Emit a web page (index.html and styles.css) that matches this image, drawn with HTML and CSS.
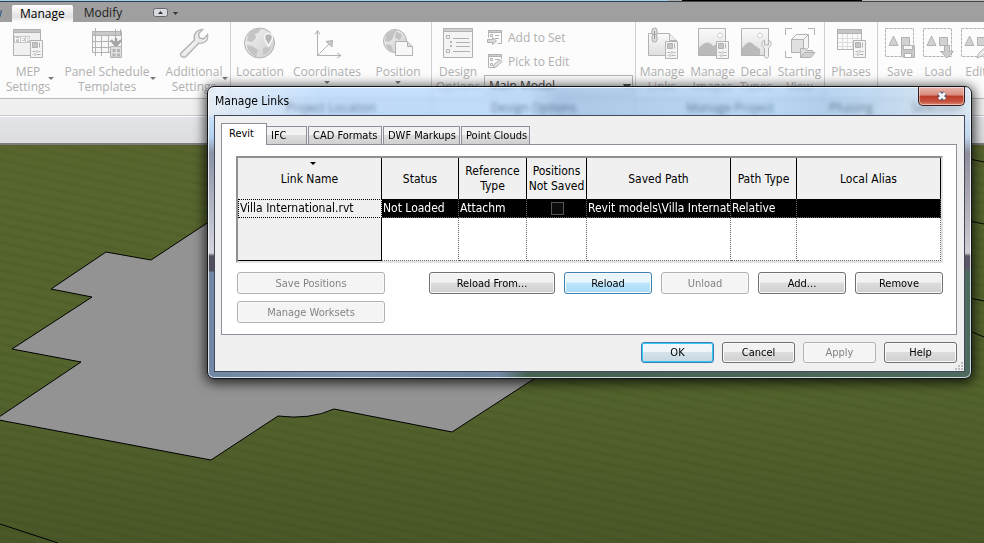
FILE: index.html
```html
<!DOCTYPE html>
<html lang="en">
<head>
<meta charset="utf-8">
<title>Manage Links</title>
<link rel="stylesheet" href="styles.css">
</head>
<body>
<svg class="defs" aria-hidden="true">
  <defs>
    <linearGradient id="fade" x1="0" y1="0" x2="0" y2="1"><stop offset="0" stop-color="#fafafa"/><stop offset="1" stop-color="#dedede"/></linearGradient>
    <linearGradient id="globe" x1="0" y1="0" x2="1" y2="1"><stop offset="0" stop-color="#f2f2f2"/><stop offset="1" stop-color="#cfcfcf"/></linearGradient>
    <g id="sheet">
      <path d="M.5.5h12v17H.5z" fill="#f4f4f4"/>
      <path d="M2.500 2.500h5v5h-5z" fill="#c4c4c4"/>
      <path d="M9.500 2.500v5M2.500 11.500h3M8.500 11.500h2M2.500 14.500h1M6.500 14.500h4M7 10v3M5 13v3"/>
    </g>
    <g id="shapes">
      <path d="M.5 1.500h28v28H.5z" fill="none" stroke-dasharray="3 1"/>
      <path d="M8.500 9l4.500 9.500H4z" fill="#d2d2d2"/>
      <path d="M16.500 10.500h8v8h-8z" fill="#d2d2d2"/>
    </g>
  </defs>
  <symbol id="i-mep" viewBox="0 0 32 32">
    <path d="M1.500 2.500h27v26h-27z" fill="#f1f1f1"/><path d="M1.500 2.500h27v3h-27z" fill="#c2c2c2"/>
    <path d="M2 9h16v7H2z" fill="#c6c6c6" stroke="none"/>
    <path d="M3.500 15v-4.500l2 2 2-2V15M13 10.500H9.500v4H13M9.500 12.500H12M14.500 15v-4.500h2.500v2.500h-2" stroke="#fff" fill="none"/>
    <use href="#sheet" x="18" y="13"/>
  </symbol>
  <symbol id="i-panel" viewBox="0 0 32 32">
    <path d="M1.500 4.500h29v21h-29z" fill="#f7f7f7"/><path d="M1.500 4.500h29v4h-29z" fill="#c9c9c9"/>
    <path d="M4.500 1v28M10.500 8v18M17.500 8v18M24.500 2v10M29.500 2v6M1 14.500h30M1 20.500h30M10.500 26v3" fill="none"/>
    <path d="M25 11v8M20 13l5 6 5-6" stroke-width="2.500" stroke="#a4a4a4" fill="none"/>
    <path d="M19.500 19.500h11v11h-11z" fill="#e0e0e0"/><path d="M21.500 22h3v3h-3zM26 22h3v3h-3zM21.500 26.500h3v3h-3zM26 26.500h3v3h-3z" fill="#b4b4b4" stroke="none"/>
  </symbol>
  <symbol id="i-wrench" viewBox="0 0 32 32">
    <path d="M3 26L16.500 13C15 8 18 3 24.500 2.500L20.500 7l1 4 4 1 4-4.500c1.500 5.500-3.500 10-8.500 8.500L8 29.500c-3 2-7-1-5-3.500z" fill="#ebebeb" stroke-width="1.300"/><path d="M6 26.500L18 14.500" fill="none" stroke="#fff"/>
  </symbol>
  <symbol id="i-location" viewBox="0 0 32 32">
    <circle cx="15.500" cy="16" r="15" fill="url(#globe)"/>
    <path d="M4 8c3-5 9-7 13-6l-3 4-3 1 1 4-4 4-5-1zM3 18l5 1 6 4-2 7C7 27 3 23 3 18zM19 21l8-2c0 4-4 8-8 9z" fill="#c4c4c4" stroke="none"/>
    <path d="M24.500 20c-1-5-4-6-4-9.500a4 4 0 0 1 8 0c0 3.500-3 4.500-4 9.500z" fill="#b5b5b5" stroke="#f8f8f8" stroke-width="1.500"/>
  </symbol>
  <symbol id="i-coord" viewBox="0 0 32 32">
    <path d="M6.500 29V4M4 7.500l2.500-4 2.500 4M6 28.500h23M26 26l4 2.500-4 2.500M7 28l14-14" fill="none"/><path d="M15 14.500l6.500-1L21 20z" fill="#c9c9c9"/>
  </symbol>
  <symbol id="i-position" viewBox="0 0 32 32">
    <circle cx="13" cy="14" r="11.500" fill="url(#globe)"/>
    <path d="M4 8c3-4 7-5 10-5l-2 5-2 5-4 2-3-1zM14 4l6 4-2 5-5-2zM4 17l5 1 2 6c-4 0-7-4-7-7z" fill="#c2c2c2" stroke="none"/>
    <path d="M13.500 14.500h12l5 5v9h-17z" fill="#f7f7f7"/><path d="M25.500 14.500v5h5" fill="#ddd"/>
  </symbol>
  <symbol id="i-options" viewBox="0 0 32 32">
    <path d="M1.500 1.500h29v29h-29z" fill="#f4f4f4"/><path d="M1.500 1.500h29v3h-29z" fill="#d0d0d0"/>
    <path d="M4.500 8.500h3v3h-3zM4.500 22.500h3v3h-3zM11 11.500h16M14 15.500h14M14 19.500h14M11 24.500h17" fill="none"/><path d="M8.500 14.500h1v1h-1zM8.500 18.500h1v1h-1z"/>
  </symbol>
  <symbol id="i-add" viewBox="0 0 16 16">
    <path d="M1.500 1.500h13v13h-4M1.500 1.500v7" fill="none"/><path d="M1.500 1.500h13v2h-13z" fill="#ccc"/><path d="M3.500 5.500h2v2h-2zM8 6.500h4M8 9.500h4" fill="none"/><path d="M.5 10.500h5v-2l4 3.500-4 3.500v-2h-5z" fill="#d9d9d9"/>
  </symbol>
  <symbol id="i-pick" viewBox="0 0 16 16">
    <path d="M6 14.500H1.500v-13h13V6" fill="none"/><path d="M1.500 1.500h13v2h-13z" fill="#ccc"/><path d="M3.500 5.500h2v2h-2zM3.500 10.500h2v2h-2zM8 6.500h4" fill="none"/><path d="M6 15l1-3.500 6-5 2 2-6 5.500z" fill="#e2e2e2"/>
  </symbol>
  <symbol id="i-links" viewBox="0 0 32 32">
    <path d="M2.500 6.500h21l7 7v15h-28z" fill="url(#fade)"/><path d="M23.500 6.500v7h7" fill="#eee"/>
    <rect x="6" y="1" width="5" height="8" rx="2.500" fill="#ddd" stroke="#aaa"/><rect x="6" y="7" width="5" height="8" rx="2.500" fill="#ddd" stroke="#aaa"/><path d="M8.500 4v8" stroke="#999"/>
    <use href="#sheet" x="19" y="14"/>
  </symbol>
  <symbol id="i-images" viewBox="0 0 32 32">
    <path d="M1.500 1.500h27v27h-27z" fill="url(#fade)"/><circle cx="23" cy="8.500" r="2.500" fill="#fff" stroke="#ccc"/>
    <path d="M2 21c5-6 10-8 14-2l4-2v11H2z" fill="#bababa" stroke="none"/>
    <use href="#sheet" x="19" y="14"/>
  </symbol>
  <symbol id="i-decal" viewBox="0 0 32 32">
    <path d="M1.500 1.500h27v27h-27z" fill="url(#fade)"/><circle cx="20" cy="8.500" r="2.500" fill="#fff" stroke="#ccc"/>
    <path d="M2 21c5-6 8-8 12-3l6 4v6H2z" fill="#bababa" stroke="none"/>
    <path d="M26.500 31c-2 0-2-1-2-3v-7c-4-3-3-7 0-8v5h4v-5c3 1 4 5 0 8v7c0 2 0 3-2 3z" fill="#f0f0f0"/>
  </symbol>
  <symbol id="i-starting" viewBox="0 0 32 32">
    <path d="M1.500 8V1.500H8M24 1.500h6.500V8M1.500 24v6.500H8" fill="none"/>
    <path d="M7.500 12.500l5-5h12v13l-5 5h-12z" fill="#f4f4f4"/><path d="M7.500 12.500h12v13h-12z" fill="#e0e0e0"/><path d="M19.500 12.500l5-5" fill="none"/>
    <path d="M16.500 30.500v-9h5l1 2h6v3" fill="#ddd"/><path d="M16.500 30.500l4-5h10.500l-4 5z" fill="#d0d0d0"/>
  </symbol>
  <symbol id="i-phases" viewBox="0 0 32 32">
    <path d="M2.500 2.500h24v20h-24z" fill="#fafafa"/><path d="M2.500 2.500h24v4h-24z" fill="#c4c4c4"/>
    <path d="M2 11.500h25M2 15.500h25M2 19.500h25M7.500 7v15M12.500 7v15M17.500 7v15M22.500 7v15" fill="none" stroke="#ddd"/><path d="M2.500 2.500h24v20h-24z" fill="none"/>
    <use href="#sheet" x="18" y="13"/>
  </symbol>
  <symbol id="i-save" viewBox="0 0 32 32"><use href="#shapes" x="1"/>
    <path d="M17.500 18.500h13v12h-11l-2-2z" fill="#c9c9c9"/><path d="M19.500 18.500h9v4h-9z" fill="#f6f6f6"/><path d="M20.500 26.500h7v4h-7z" fill="#fff"/>
  </symbol>
  <symbol id="i-load" viewBox="0 0 32 32"><use href="#shapes" x="1"/><path d="M22.500 18.500h5v6h4l-6.500 6.500-6.500-6.500h4z" fill="#ccc"/></symbol>
  <symbol id="i-edit" viewBox="0 0 32 32"><use href="#shapes" x="1"/><path d="M17 31l2-5 10-9 3 3-10 9z" fill="#ececec"/></symbol>
</svg>

<header class="ribbon">
  <nav class="tabs">
    <a class="tab tab-view" href="#">View</a>
    <a class="tab tab-active" href="#">Manage</a>
    <a class="tab" href="#">Modify</a>
    <button class="collapse" aria-label="Minimize ribbon"><svg width="26" height="12" viewBox="0 0 26 12"><rect x=".5" y="1.500" width="14" height="8" rx="2" fill="#d8dade" stroke="#62666e"/><path d="M5 7h5L7.500 4zM20 5h5l-2.500 3z" fill="#333"/></svg></button>
  </nav>
  <div class="panels">
    <section class="group">
      <div class="tools">
        <button class="tool w56 side"><svg><use href="#i-mep"/></svg><span>MEP<br>Settings</span></button>
        <button class="tool w102 side"><svg><use href="#i-panel"/></svg><span>Panel Schedule<br>Templates</span></button>
        <button class="tool w70 side"><svg><use href="#i-wrench"/></svg><span>Additional<br>Settings</span></button>
      </div>
      <h2></h2>
    </section>
    <section class="group">
      <div class="tools">
        <button class="tool w58"><svg><use href="#i-location"/></svg><span>Location</span></button>
        <button class="tool w76 below"><svg><use href="#i-coord"/></svg><span>Coordinates</span></button>
        <button class="tool w66 below"><svg><use href="#i-position"/></svg><span>Position</span></button>
      </div>
      <h2>Project Location</h2>
    </section>
    <section class="group">
      <div class="tools">
        <button class="tool w52"><svg><use href="#i-options"/></svg><span>Design<br>Options</span></button>
        <div class="stack">
          <button class="small"><svg><use href="#i-add"/></svg>Add to Set</button>
          <button class="small"><svg><use href="#i-pick"/></svg>Pick to Edit</button>
          <select aria-label="Active design option"><option>Main Model</option></select>
        </div>
      </div>
      <h2>Design Options</h2>
    </section>
    <section class="group">
      <div class="tools">
        <button class="tool w52"><svg><use href="#i-links"/></svg><span>Manage<br>Links</span></button>
        <button class="tool w48"><svg><use href="#i-images"/></svg><span>Manage<br>Images</span></button>
        <button class="tool w38"><svg><use href="#i-decal"/></svg><span>Decal<br>Types</span></button>
        <button class="tool w48"><svg><use href="#i-starting"/></svg><span>Starting<br>View</span></button>
      </div>
      <h2>Manage Project</h2>
    </section>
    <section class="group">
      <div class="tools">
        <button class="tool w52"><svg><use href="#i-phases"/></svg><span>Phases</span></button>
      </div>
      <h2>Phasing</h2>
    </section>
    <section class="group">
      <div class="tools sel">
        <button class="tool w38"><svg><use href="#i-save"/></svg><span>Save</span></button>
        <button class="tool w38"><svg><use href="#i-load"/></svg><span>Load</span></button>
        <button class="tool w38"><svg><use href="#i-edit"/></svg><span>Edit</span></button>
      </div>
      <h2>Selection</h2>
    </section>
  </div>
</header>
<div class="optionbar"></div>

<main class="view">
  <svg class="model" width="984" height="398" viewBox="0 145 984 398" fill="none" stroke="#000">
    <path d="M230 208L151 260 106 252 51 289 92 297 12 349 81 362-1 417V420L211 460 278 416Q310 420 334 409L452 432 560 362V208z" fill="#939393"/>
    <path d="M0 524L58 543M960 157L984 162M960 219L984 224M960 296L984 301M960 327L984 337"/>
  </svg>
</main>

<div class="dialog" role="dialog" aria-labelledby="dlg-title">
  <div class="titlebar">
    <h1 id="dlg-title">Manage Links</h1>
    <button class="close" aria-label="Close"><svg width="14" height="12" viewBox="0 0 14 12"><path d="M4 3l6 6M10 3L4 9" stroke="#4b4f63" stroke-width="5"/><path d="M4 3l6 6M10 3L4 9" stroke="#f4f4f8" stroke-width="3"/></svg></button>
  </div>
  <div class="content">
    <div class="sheets" role="tablist">
      <button class="sheet on" role="tab">Revit</button>
      <button class="sheet ifc" role="tab">IFC</button>
      <button class="sheet cad" role="tab">CAD Formats</button>
      <button class="sheet dwf" role="tab">DWF Markups</button>
      <button class="sheet pts" role="tab">Point Clouds</button>
    </div>
    <div class="page">
      <div class="frame">
        <table>
          <colgroup><col class="c144"><col class="c77"><col class="c68"><col class="c60"><col class="c144"><col class="c66"><col class="c144"></colgroup>
          <thead><tr><th class="sorted">Link Name</th><th>Status</th><th>Reference Type</th><th>Positions<br>Not Saved</th><th>Saved Path</th><th>Path Type</th><th>Local Alias</th></tr></thead>
          <tbody>
            <tr class="picked"><td>Villa International.rvt</td><td>Not Loaded</td><td>Attachm</td><td class="mid"><input type="checkbox" aria-label="Positions not saved"></td><td>Revit models\Villa Internat</td><td>Relative</td><td></td></tr>
            <tr class="blank"><td></td><td></td><td></td><td></td><td></td><td></td><td></td></tr>
          </tbody>
        </table>
      </div>
      <div class="actions">
        <div class="left">
          <button class="btn" disabled>Save Positions</button>
          <button class="btn" disabled>Manage Worksets</button>
        </div>
        <div class="right">
          <button class="btn wide">Reload From...</button>
          <button class="btn hot">Reload</button>
          <button class="btn" disabled>Unload</button>
          <button class="btn">Add...</button>
          <button class="btn">Remove</button>
        </div>
      </div>
    </div>
    <div class="footer">
      <button class="btn default">OK</button>
      <button class="btn">Cancel</button>
      <button class="btn" disabled>Apply</button>
      <button class="btn">Help</button>
    </div>
    <svg class="grip" width="9" height="9" viewBox="0 0 9 9"><path d="M6 0h2v2H6zM3 3h2v2H3zM6 3h2v2H6zM0 6h2v2H0zM3 6h2v2H3zM6 6h2v2H6z" fill="#bbb"/></svg>
  </div>
</div>
</body>
</html>
```
FILE: styles.css
```css
* { box-sizing: border-box; }
body {
  margin: 0;
  min-height: 100vh;
  display: flex;
  flex-direction: column;
  position: relative;
  overflow: hidden;
  font: 12px/15px "Open Sans", "Noto Sans", sans-serif;
  color: #000;
}
button, select { font: inherit; color: inherit; margin: 0; padding: 0; border: 0; background: none; }
h1, h2 { margin: 0; font: inherit; }
.defs { position: absolute; width: 0; height: 0; }

/* Ribbon */
.ribbon::before {
  content: "";
  display: block;
  height: 2px;
  background:
    linear-gradient(90deg, #27445a 0 682px, #444 682px) 0 1px / 100% 1px no-repeat,
    linear-gradient(90deg, #a9cbe0 0 668px, #b0aca4 668px 682px, #000 682px 862px, #bbb 862px);
}
.tabs { display: flex; align-items: flex-end; height: 20px; background: #9f9f9f; }
.tab { height: 18px; padding: 0 10px; line-height: 18px; color: #222; text-decoration: none; }
.tab-view { display: flex; justify-content: flex-end; width: 2px; margin-right: 10px; padding: 0; overflow: hidden; color: #1c4d7c; }
.tab-active { height: 17px; margin-right: 1px; padding: 0 8px; background: linear-gradient(#fff, #e2e2e2 70%, #fdfdfd); color: #000; border-radius: 2px 2px 0 0; }
.collapse { height: 12px; margin: 0 0 3px 21px; display: flex; }
.panels { display: flex; height: 95px; background: linear-gradient(#fcfcfc 0 76px, #b9babc 76px 77px, #f0f0f0 77px 93px, #c4c6c8 93px 94px, #fff 94px); overflow: hidden; }
.group { flex: none; display: flex; flex-direction: column; border-right: 1px solid #d0d0d0; }
.group:last-child { border: 0; }
.tools { display: flex; height: 78px; padding-top: 5px; }
.sel { padding-left: 3px; }
.group h2 { height: 16px; text-align: center; color: #000; }
.tool { position: relative; display: flex; flex-direction: column; align-items: center; gap: 5px; color: #b0b0b0; white-space: nowrap; }
.tool svg, .small svg { width: 32px; height: 32px; flex: none; stroke: #b2b2b2; }
.small svg { width: 16px; height: 16px; }
.w38 { width: 38px; } .w48 { width: 49px; } .w52 { width: 52px; } .w56 { width: 56px; } .w58 { width: 58px; }
.w66 { width: 66px; } .w70 { width: 72px; } .w76 { width: 76px; } .w102 { width: 102px; }
.side::after, .below::after {
  content: "";
  border: 3px solid transparent;
  border-top-color: #7a7a7a;
  border-bottom: 0;
}
.side::after { position: absolute; right: 2px; top: 50px; }
.below::after { margin-top: -3px; }
.stack { display: flex; flex-direction: column; width: 151px; }
.small { display: flex; align-items: center; gap: 5px; height: 24px; padding: 0 0 4px 3px; color: #b0b0b0; }
.stack select {
  appearance: none;
  width: 149px;
  height: 20px;
  padding: 0 4px;
  border: 1px solid #b5b5b5;
  border-radius: 0;
  color: #444;
  background:
    linear-gradient(to bottom left, #555 50%, transparent 50%) right 5px top 8px / 4px 5px no-repeat,
    linear-gradient(to bottom right, #555 50%, transparent 50%) right 1px top 8px / 4px 5px no-repeat,
    #fafafa;
}
.optionbar { height: 28px; background: linear-gradient(#e2e4e7, #dcdde0); border-bottom: 2px solid #7f7a7c; }

/* Model view */
.view {
  flex: 1;
  display: flex;
  overflow: hidden;
  background:
    repeating-linear-gradient(12deg, rgba(30, 40, 0, 0) 0 3px, rgba(30, 40, 0, .09) 6px, rgba(30, 40, 0, 0) 9px),
    linear-gradient(#58662e, #54642d 60%, #4a5728);
}
.model { flex: none; }

/* Dialog window */
.dialog {
  position: absolute;
  left: 207px;
  right: 12px;
  top: 86px;
  padding: 0 6px 6px;
  border: 1px solid #10151c;
  border-radius: 7px;
  backdrop-filter: blur(2px);
  background:
    linear-gradient(90deg, #7088a3, #8093ad 20%, #6d86a0 35%, #7389a5 38%, #45614f 42%, #4c6a5e) 0 100% / 100% 7px no-repeat,
    linear-gradient(#c9e1f8 0, #b3d1ee 21px, #8c93a6 37px, #d4d6de 137px, #50505f 140px 155px, #7088a3 156px) 0 29px / 8px 100% no-repeat,
    linear-gradient(#d2e3f5 0, #c0d6ee 21px, #8f8d9a 37px, #cfcbd3 137px, #5a5866 140px 151px, #4c6a5e 157px) 100% 29px / 8px 100% no-repeat,
    linear-gradient(100deg, rgba(222, 235, 248, .6), rgba(160, 204, 252, .6) 15%, rgba(160, 206, 255, .6) 42%, rgba(125, 172, 222, .6) 46%, rgba(152, 200, 248, .6) 72%, rgba(135, 184, 232, .6) 80%, rgba(208, 224, 241, .7)) 0 0 / 100% 29px no-repeat;
  box-shadow: inset 0 0 0 1px rgba(255, 255, 255, .75), 0 2px 12px 2px rgba(0, 0, 0, .75);
  font: 11px/15px "DejaVu Sans Condensed", "DejaVu Sans", sans-serif;
}
.titlebar { display: flex; justify-content: space-between; height: 28px; }
h1 { padding: 7px 0 0 1px; font-size: 12px; }
.close {
  display: grid;
  place-items: center;
  width: 47px;
  height: 19px;
  border: 1px solid #3d1a1c;
  border-top: 0;
  border-radius: 0 0 5px 5px;
  background: linear-gradient(#e9b8ae, #d98a7c 45%, #bb3a28 50%, #c4513c 80%, #dd8a75);
  box-shadow: inset 0 0 0 1px rgba(255, 255, 255, .45);
}
.content { position: relative; padding: 7px 7px 8px 6px; border: 1px solid #41485a; background: #f0f0f0; }
.sheets { display: flex; align-items: flex-end; height: 21px; }
.sheet {
  height: 18px;
  margin-left: 1px;
  padding: 0 0 0 4px;
  border: 1px solid #8c8e99;
  border-bottom: 0;
  background: linear-gradient(#f2f2f2 0 45%, #dedede 50%, #d0d0d0);
  line-height: 17px;
  text-align: left;
  white-space: nowrap;
}
.ifc { width: 40px; margin: 0; border-left: 0; }
.cad { width: 74px; }
.dwf { width: 77px; }
.pts { width: 69px; }
.on { position: relative; height: 22px; width: 46px; margin: 0 0 -1px; padding: 0 7px 2px; background: #fff; }
.page { padding: 11px 13px 11px 14px; border: 1px solid #8c8e99; background: #fff; }
.frame { border: 2px solid; border-color: #909090 #e3e3e3 #e3e3e3 #909090; }
table { width: 100%; table-layout: fixed; border-collapse: separate; border-spacing: 0; font-size: 12px; }
.c144 { width: 144px; } .c77 { width: 77px; } .c68 { width: 68px; } .c60 { width: 60px; } .c66 { width: 66px; }
th { position: relative; height: 41px; padding: 1px 0 0; border-right: 1px solid #000; background: #f0f0f0; font-weight: normal; }
.sorted::before {
  content: "";
  position: absolute;
  top: 4px;
  left: 50%;
  border: 3px solid transparent;
  border-top-color: #000;
  border-bottom: 0;
}
td { height: 43px; padding: 0 0 0 1px; overflow: hidden; white-space: nowrap; border-right: 1px dotted #666; border-bottom: 1px dotted #666; }
.picked td { height: 19px; background: #000; color: #fff; }
td:first-child { background: #f0f0f0; }
.picked td:first-child { border: 1px dotted #000; color: #000; background: #f0f0f0; }
.blank td:first-child { border-right: 1px solid #000; border-bottom: 1px solid #000; }
.mid { text-align: center; }
.mid input { appearance: none; display: block; width: 13px; height: 13px; margin: 0 auto; border: 1px solid #555; background: #0c0c0c; }
.actions { display: flex; justify-content: space-between; margin-top: 9px; padding-left: 1px; }
.left { display: flex; flex-direction: column; gap: 7px; width: 148px; }
.right { display: flex; align-items: flex-start; gap: 9px; }
.btn {
  height: 22px;
  border: 1px solid #707070;
  border-radius: 3px;
  background: linear-gradient(#f2f2f2 0 45%, #dddddd 50%, #cfcfcf);
  box-shadow: inset 0 0 0 1px #fafafa;
  text-align: center;
}
.right .btn { width: 88px; }
.right .wide { width: 126px; }
.btn:disabled { border-color: #adb2b5; background: #f4f4f4; color: #838383; }
.hot { border-color: #3c7fb1; background: linear-gradient(#eaf6fd 0 45%, #bee6fd 50%, #a7d9f5); }
.footer { display: flex; justify-content: flex-end; gap: 8px; margin-top: 7px; }
.footer .btn { width: 73px; height: 21px; }
.default { border-color: #3c7fb1; background: linear-gradient(#eff5f8 0 45%, #d5e3ea 50%, #c3d6e0); }
.footer .default { box-shadow: inset 0 0 0 1px #36c8f5; }
.grip { position: absolute; right: 0; bottom: 0; }
```
